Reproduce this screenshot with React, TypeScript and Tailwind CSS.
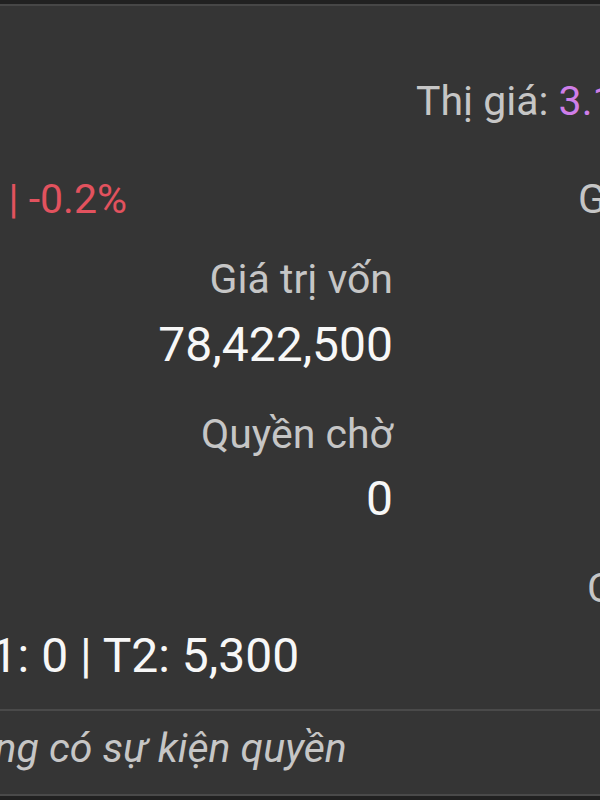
import React from "react";

export default function App() {
  return (
    <div className="w-[600px] h-[800px] overflow-hidden bg-[#353535] flex flex-col font-['Roboto','Noto_Sans',sans-serif] whitespace-nowrap">
      <div className="h-[4px] bg-[#212121] shrink-0" />
      <div className="h-[2px] bg-[#474747] shrink-0" />

      {/* Thị giá */}
      <div className="mt-[71px] h-[48px] pl-[416px] text-[41px] leading-[48px] text-[#c6c6c6] shrink-0">
        Thị giá: <span className="text-[#cf7ee9]">3.120</span>
      </div>

      {/* change row */}
      <div className="mt-[50px] h-[48px] flex text-[41px] leading-[48px] shrink-0">
        <div className="w-[127px] shrink-0 flex justify-end overflow-hidden">
          <span className="shrink-0 text-[#e2525e]">-10 | -0.2%</span>
        </div>
        <div className="shrink-0 pl-[451px] text-[#c6c6c6]">Giá vốn</div>
      </div>

      {/* Giá trị vốn */}
      <div className="mt-[32px] h-[48px] w-[393px] text-right text-[41px] leading-[48px] text-[#c6c6c6] shrink-0">
        Giá trị vốn
      </div>
      <div className="mt-[14px] h-[56px] w-[393px] text-right text-[48px] leading-[56px] text-[#f7f7f7] shrink-0">
        78,422,500
      </div>

      {/* Quyền chờ */}
      <div className="mt-[37px] h-[48px] w-[393px] text-right text-[41px] leading-[48px] text-[#c6c6c6] shrink-0">
        Quyền chờ
      </div>
      <div className="mt-[13px] h-[56px] w-[393px] text-right text-[48px] leading-[56px] text-[#f7f7f7] shrink-0">
        0
      </div>

      {/* C row */}
      <div className="mt-[37px] h-[48px] pl-[587px] text-[41px] leading-[48px] text-[#c6c6c6] shrink-0">
        Cổ tức
      </div>

      {/* T1 T2 */}
      <div className="mt-[16px] h-[56px] ml-[-38px] text-[48px] leading-[56px] text-[#f7f7f7] shrink-0">
        T1: 0 | T2: 5,300
      </div>

      <div className="mt-[25px] h-[2px] bg-[#4a4a4a] shrink-0" />

      <div className="mt-[13px] h-[48px] ml-[-75px] text-[41px] leading-[48px] italic text-[#c6c6c6] shrink-0">
        Không có sự kiện quyền
      </div>

      <div className="flex-1" />
      <div className="h-[2px] bg-[#4a4a4a] shrink-0" />
      <div className="h-[4px] bg-[#212121] shrink-0" />
    </div>
  );
}
